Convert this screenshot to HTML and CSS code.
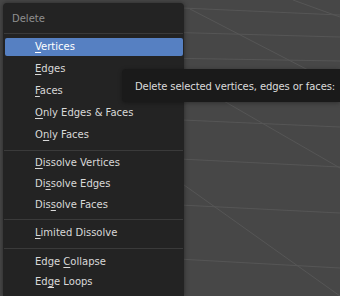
FILE: index.html
```html
<!DOCTYPE html>
<html lang="en">
<head>
  <meta charset="UTF-8">
  <meta name="viewport" content="width=device-width, initial-scale=1.0">
  <title>Delete</title>
  <link rel="stylesheet" href="styles.css">
</head>
<body>
  <!-- viewport grid behind the menu -->
  <svg class="grid" width="340" height="296" viewBox="0 0 340 296">
    <line x1="160" y1="7" x2="340" y2="15" />
    <line x1="160" y1="32" x2="340" y2="37" />
    <line x1="160" y1="58" x2="340" y2="61" />
    <line x1="293" y1="0" x2="340" y2="17" />
    <line x1="190" y1="9" x2="310" y2="71" />
    <line x1="160" y1="119" x2="340" y2="127" />
    <line x1="160" y1="158" x2="340" y2="167" />
    <line x1="160" y1="204" x2="340" y2="213" />
    <line x1="160" y1="258" x2="340" y2="268" />
    <line x1="170" y1="70" x2="340" y2="168" />
    <line x1="170" y1="175" x2="340" y2="296" />
  </svg>

  <!-- menu -->
  <div class="menu">
    <div class="menu-title">Delete</div>
    <div class="sep"></div>
    <div class="group group-main">
      <div class="item active"><u>V</u>ertices</div>
      <div class="item"><u>E</u>dges</div>
      <div class="item"><u>F</u>aces</div>
      <div class="item"><u>O</u>nly Edges &amp; Faces</div>
      <div class="item">O<u>n</u>ly Faces</div>
    </div>
    <div class="sep"></div>
    <div class="group group-dissolve">
      <div class="item"><u>D</u>issolve Vertices</div>
      <div class="item">Di<u>s</u>solve Edges</div>
      <div class="item">Dis<u>s</u>olve Faces</div>
    </div>
    <div class="sep"></div>
    <div class="group group-limited">
      <div class="item"><u>L</u>imited Dissolve</div>
    </div>
    <div class="sep"></div>
    <div class="group group-edge">
      <div class="item">Edge <u>C</u>ollapse</div>
      <div class="item">Ed<u>g</u>e Loops</div>
    </div>
  </div>

  <!-- tooltip -->
  <div class="tooltip">Delete selected vertices, edges or faces:</div>
</body>
</html>
```
FILE: styles.css
```css
* {
  box-sizing: border-box;
  margin: 0;
  padding: 0;
}
body {
  width: 340px;
  height: 296px;
  background-color: #474747;
  font-family: "DejaVu Sans", sans-serif;
  font-size: 10px;
  color: #d9d9d9;
  position: relative;
  overflow: hidden;
}
/* grid lines of the 3d view */
.grid {
  position: absolute;
  top: 0;
  left: 0;
}
.grid line {
  stroke: #565656;
  stroke-width: 1;
}
/* popup menu, runs off the bottom of the view */
.menu {
  position: absolute;
  top: 3px;
  left: 3px;
  width: 181px;
  height: 293px;
  overflow: hidden;
  background-color: #232323;
  border-radius: 4px 4px 0 0;
  box-shadow: 0 0 5px rgba(0, 0, 0, 0.45);
}
.menu-title {
  height: 30px;
  line-height: 28px;
  padding: 2px 0 0 9px;
  color: #8f8f8f;
}
.sep {
  height: 1px;
  margin: 0 1px;
  background-color: #3a3a3a;
}
.group {
  display: flex;
  flex-direction: column;
  margin: 0 1px 0 2px;
}
.group-main {
  gap: 4px;
  padding: 4px 0 6px;
}
.group-dissolve {
  gap: 3px;
  padding: 3px 0 5px;
}
.group-limited {
  padding: 4px 0 6px;
}
.group-edge {
  gap: 2px;
  padding: 4px 0;
}
.item {
  height: 18px;
  line-height: 18px;
  padding-left: 30px;
  white-space: nowrap;
  border-radius: 2px;
}
.item.active {
  background-color: #5680c2;
  color: #ffffff;
}
.item u {
  text-decoration: underline;
  text-underline-offset: 2px;
}
/* tooltip */
.tooltip {
  position: absolute;
  top: 69px;
  left: 122px;
  width: 218px;
  height: 33px;
  padding-left: 13px;
  line-height: 35px;
  letter-spacing: -0.1px;
  background-color: #1a1a1a;
  border-radius: 4px 0 0 4px;
  color: #dcdcdc;
  white-space: nowrap;
  box-shadow: 0 1px 4px rgba(0, 0, 0, 0.35);
}
```
